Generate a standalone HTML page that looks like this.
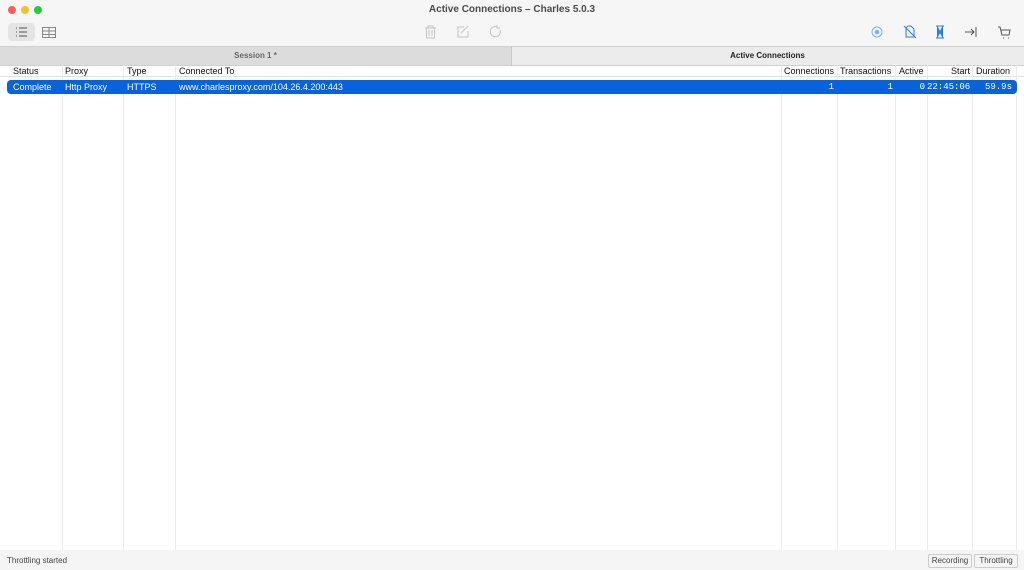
<!DOCTYPE html><html><head><style>
body{margin:0;width:1024px;height:570px;overflow:hidden;background:#fff;font-family:"Liberation Sans",sans-serif;position:relative}
.a{position:absolute}
.t{font-size:9px;color:#111;white-space:nowrap}
.vl{position:absolute;top:65px;height:485px;width:1px;background:#ebebeb}
</style></head><body>
<div class="a" style="left:0;top:0;width:1024px;height:46px;background:#f6f6f6"></div>
<div class="a" style="left:8px;top:6px;width:8px;height:8px;border-radius:50%;background:#fe5f57"></div>
<div class="a" style="left:21px;top:6px;width:8px;height:8px;border-radius:50%;background:#febc2e"></div>
<div class="a" style="left:34px;top:6px;width:8px;height:8px;border-radius:50%;background:#28c840"></div>
<div class="a t" style="left:0;width:1024px;top:4px;text-align:center;font-size:10px;font-weight:bold;color:#4a4a4a">Active Connections – Charles 5.0.3</div>
<div class="a" style="left:8px;top:23px;width:27px;height:18px;border-radius:4px;background:#e4e4e4"></div>
<svg class="a" style="left:0;top:0" width="1024" height="46" fill="none" stroke-width="1">
<g stroke="#555"><path d="M16 28h1M16 32h1M16 36h1M19 28h8M19 32h8M19 36h8"/></g>
<g stroke="#888"><rect x="42.5" y="27.5" width="13" height="10"/><path d="M42 31h14M42 34.5h14M49 28v10"/></g>
<g stroke="#c4c4c4"><path d="M425 28h11M428 28v-2h5v2M426.5 28v10h8v-10M429 30v6M432 30v6"/><path d="M464 27h-6v10h10v-6M461 33l7-7"/><path d="M500 30a5 5 0 1 1-3-3M497 25v3h3"/></g>
<g stroke="#7ab0f5"><circle cx="877" cy="32" r="5"/><circle cx="877" cy="32" r="1.8" fill="#7ab0f5"/></g>
<g stroke="#2f7ce8"><path d="M906 28l2-2h3l3 3v8h-8zM904 26l12 12"/><path d="M936 26h8M936 38h8M937 26l3 6-3 6M943 26l-3 6 3 6" fill="#2f7ce8"/></g>
<g stroke="#555"><path d="M965 32h9M971 29l3 3-3 3M976 27v10"/><path d="M998 27h2l2 8h7l1-5h-9M1003 38h1M1008 38h1"/></g>
</svg>
<div class="a" style="left:0;top:46px;width:511px;height:18px;background:#dcdcdc;border-top:1px solid #d0d0d0;border-bottom:1px solid #cfcfcf"></div>
<div class="a" style="left:511px;top:46px;width:513px;height:18px;background:#ececec;border-top:1px solid #d0d0d0;border-left:1px solid #c8c8c8;border-bottom:1px solid #cfcfcf"></div>
<div class="a t" style="left:0;width:511px;top:51px;text-align:center;font-size:8px;font-weight:bold;color:#666">Session 1 *</div>
<div class="a t" style="left:511px;width:513px;top:51px;text-align:center;font-size:8px;font-weight:bold;color:#222">Active Connections</div>
<div class="a" style="left:0;top:76px;width:1024px;height:1px;background:#e2e2e2"></div>
<div class="vl" style="left:62px"></div><div class="vl" style="left:123px"></div><div class="vl" style="left:175px"></div><div class="vl" style="left:781px"></div><div class="vl" style="left:837px"></div><div class="vl" style="left:895px"></div><div class="vl" style="left:927px"></div><div class="vl" style="left:972px"></div><div class="vl" style="left:1016px"></div>
<div class="a t" style="left:13px;top:66px">Status</div>
<div class="a t" style="left:65px;top:66px">Proxy</div>
<div class="a t" style="left:127px;top:66px">Type</div>
<div class="a t" style="left:179px;top:66px">Connected To</div>
<div class="a t" style="left:784px;top:66px">Connections</div>
<div class="a t" style="left:840px;top:66px">Transactions</div>
<div class="a t" style="left:899px;top:66px">Active</div>
<div class="a t" style="left:927px;width:43px;text-align:right;top:66px">Start</div>
<div class="a t" style="left:976px;top:66px">Duration</div>
<div class="a" style="left:7px;top:80px;width:1010px;height:14px;border-radius:4px;background:#0862db"></div>
<div class="a t" style="left:13px;top:82px;color:#fff">Complete</div>
<div class="a t" style="left:65px;top:82px;color:#fff">Http Proxy</div>
<div class="a t" style="left:127px;top:82px;color:#fff">HTTPS</div>
<div class="a t" style="left:179px;top:82px;color:#fff">www.charlesproxy.com/104.26.4.200:443</div>
<div class="a t" style="left:781px;width:53px;text-align:right;top:82px;color:#fff;font-family:'Liberation Mono',monospace">1</div>
<div class="a t" style="left:837px;width:56px;text-align:right;top:82px;color:#fff;font-family:'Liberation Mono',monospace">1</div>
<div class="a t" style="left:895px;width:30px;text-align:right;top:82px;color:#fff;font-family:'Liberation Mono',monospace">0</div>
<div class="a t" style="left:927px;width:43px;text-align:right;top:82px;color:#fff;font-family:'Liberation Mono',monospace">22:45:06</div>
<div class="a t" style="left:972px;width:40px;text-align:right;top:82px;color:#fff;font-family:'Liberation Mono',monospace">59.9s</div>
<div class="a" style="left:0;top:550px;width:1024px;height:20px;background:#f5f5f5"></div>
<div class="a t" style="left:7px;top:556px;font-size:8px;color:#444">Throttling started</div>
<div class="a t" style="left:928px;top:554px;width:42px;height:12px;border:1px solid #ccc;border-radius:2px;font-size:8px;color:#444;text-align:center;line-height:12px">Recording</div>
<div class="a t" style="left:974px;top:554px;width:42px;height:12px;border:1px solid #ccc;border-radius:2px;font-size:8px;color:#444;text-align:center;line-height:12px">Throttling</div>
</body></html>
